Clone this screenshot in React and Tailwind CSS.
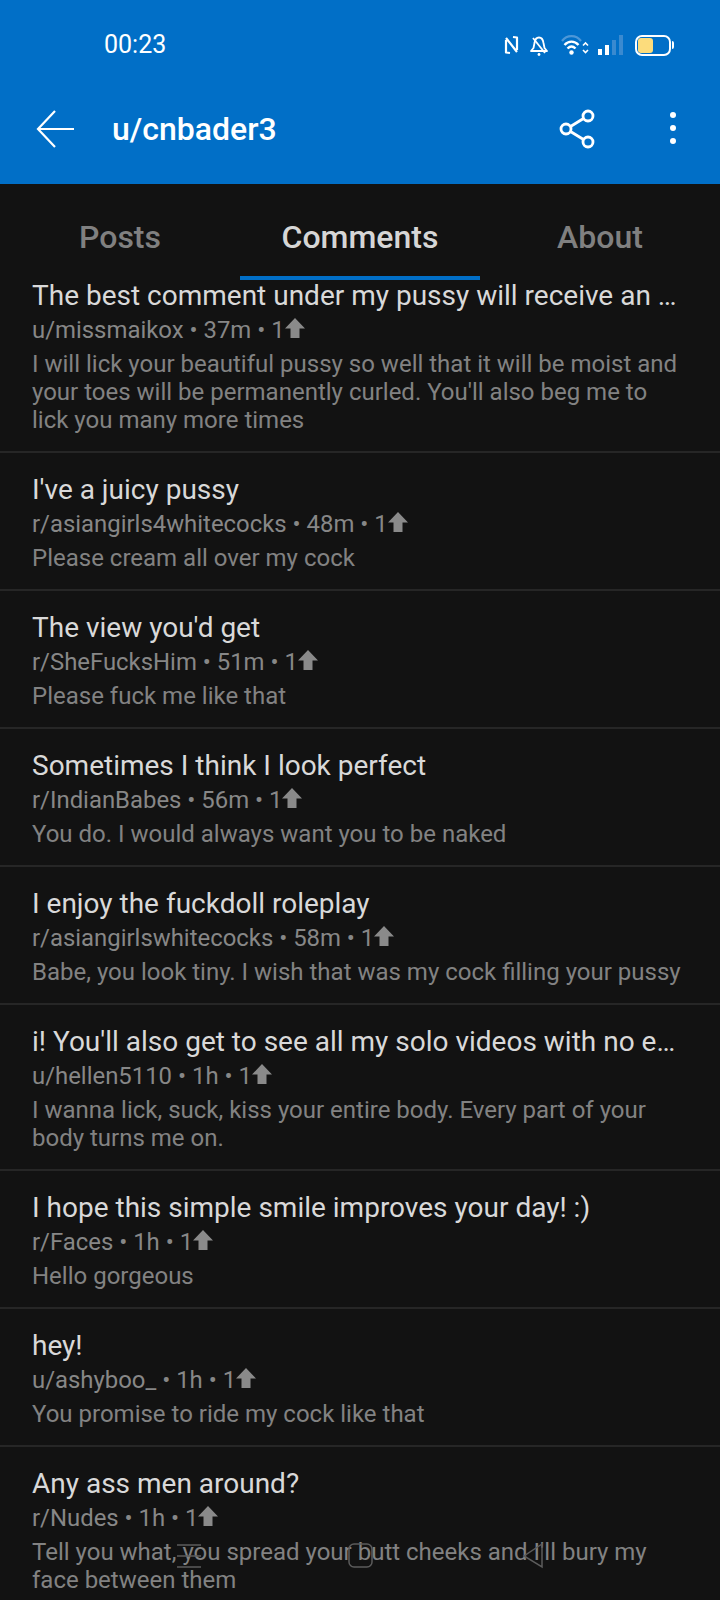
const comments = [
  {
    title: 'The best comment under my pussy will receive an …',
    meta: 'u/missmaikox • 37m • 1',
    body: "I will lick your beautiful pussy so well that it will be moist and your toes will be permanently curled. You'll also beg me to lick you many more times",
  },
  { title: "I've a juicy pussy", meta: 'r/asiangirls4whitecocks • 48m • 1', body: 'Please cream all over my cock' },
  { title: "The view you'd get", meta: 'r/SheFucksHim • 51m • 1', body: 'Please fuck me like that' },
  { title: 'Sometimes I think I look perfect', meta: 'r/IndianBabes • 56m • 1', body: 'You do. I would always want you to be naked' },
  { title: 'I enjoy the fuckdoll roleplay', meta: 'r/asiangirlswhitecocks • 58m • 1', body: 'Babe, you look tiny. I wish that was my cock filling your pussy' },
  {
    title: "i! You'll also get to see all my solo videos with no e…",
    meta: 'u/hellen5110 • 1h • 1',
    body: 'I wanna lick, suck, kiss your entire body. Every part of your body turns me on.',
  },
  { title: 'I hope this simple smile improves your day! :)', meta: 'r/Faces • 1h • 1', body: 'Hello gorgeous' },
  { title: 'hey!', meta: 'u/ashyboo_ • 1h • 1', body: 'You promise to ride my cock like that' },
  {
    title: 'Any ass men around?',
    meta: 'r/Nudes • 1h • 1',
    body: "Tell you what, you spread your butt cheeks and I'll bury my face between them",
  },
];

function UpArrow() {
  return (
    <svg width="20" height="20" viewBox="0 0 20 20" className="shrink-0 mb-[5px]">
      <path d="M10 0 L20 10.500 H14.500 V20 H5.500 V10.500 H0 Z" fill="#8a8a8a" />
    </svg>
  );
}

function StatusIcons() {
  return (
    <div className="flex items-center">
      <svg width="15" height="20" viewBox="0 0 15 20" fill="none" stroke="white" strokeWidth="2.200" className="mr-[11px]">
        <path d="M2 5 V17.500 L6 18 M2 3 L13 17 M13 15 V2.500 L9 2" strokeLinejoin="round" />
      </svg>
      <svg width="18" height="21" viewBox="0 0 18 21" fill="none" stroke="white" strokeWidth="1.800" className="mr-[13px]">
        <path d="M4.500 8 C5 4 7 2.500 9 2.500 C11.500 2.500 13 4.500 13.500 8 L14.500 13 L17 16 H1 L3.500 13 Z" strokeLinejoin="round" />
        <path d="M3 3 L15 18" />
        <circle cx="9" cy="19.500" r="1.400" fill="white" stroke="none" />
      </svg>
      <svg width="28" height="22" viewBox="0 0 28 22" fill="none" className="mr-[9px]">
        <path d="M1 7 C6 0.500 15 0.500 20 7" stroke="#4d97d8" strokeWidth="2.200" />
        <path d="M3.500 11 C7.500 6.500 13.500 6.500 17.500 11" stroke="white" strokeWidth="2.400" />
        <path d="M6.500 14.500 C9 12 12 12 14.500 14.500" stroke="white" strokeWidth="2.400" />
        <circle cx="10.500" cy="18.500" r="2.200" fill="white" />
        <path d="M22 11.500 L24.500 9 L27 11.500 M22 16 L24.500 18.500 L27 16" stroke="white" strokeWidth="1.600" />
      </svg>
      <div className="flex items-end gap-[3px] h-[20px] mr-[12px]">
        <div className="w-[4px] h-[6px] bg-white" />
        <div className="w-[4px] h-[10px] bg-white" />
        <div className="w-[4px] h-[15px] bg-[#3a8ad0]" />
        <div className="w-[4px] h-[20px] bg-[#3a8ad0]" />
      </div>
      <div className="w-[36px] h-[21px] border-2 border-white rounded-[7px] p-[1px] flex items-stretch">
        <div className="w-[15px] bg-[#fcdc7c] rounded-[3px]" />
      </div>
      <div className="w-[2px] h-[8px] bg-white rounded-r ml-[1px]" />
    </div>
  );
}

function CommentRow({ comment }) {
  return (
    <div className="px-8 pt-[20px] pb-[17px] border-b-2 border-[#262626]">
      <div className="text-[28px] leading-[34px] text-[#d9d9d9] whitespace-nowrap">{comment.title}</div>
      <div className="flex items-center text-[23.9px] leading-[35px] text-[#878787]">
        <span className="whitespace-pre">{comment.meta}</span>
        <UpArrow />
      </div>
      <div className="text-[24px] leading-[28px] text-[#828282] pt-[2px]">{comment.body}</div>
    </div>
  );
}

export default function App() {
  return (
    <div className="relative w-[720px] h-[1600px] overflow-hidden bg-[#121212] font-['Roboto',sans-serif]">
      <div className="h-[184px] bg-[#016fc7] text-white">
        <div className="h-[90px] pl-[104px] pr-[46px] flex items-center justify-between">
          <span className="text-[25px]">00:23</span>
          <StatusIcons />
        </div>
        <div className="h-[78px] pl-[36px] pr-[44px] flex items-center">
          <svg width="40" height="40" viewBox="0 0 40 40" fill="none" stroke="white" strokeWidth="2.200">
            <path d="M38 20 H2 M19 2 L2 20 L19 38" />
          </svg>
          <span className="ml-[36px] text-[32px] font-medium">u/cnbader3</span>
          <div className="ml-auto flex items-center">
            <svg width="36" height="40" viewBox="0 0 36 40" fill="none" stroke="white" strokeWidth="2.800">
              <circle cx="7" cy="20" r="5" />
              <circle cx="29" cy="7" r="5" />
              <circle cx="29" cy="33" r="5" />
              <path d="M11.500 17.500 L24.500 9.500 M11.500 22.500 L24.500 30.500" />
            </svg>
            <div className="ml-[75px] flex flex-col gap-[7px] -mt-[2px]">
              <div className="w-[6px] h-[6px] rounded-full bg-white" />
              <div className="w-[6px] h-[6px] rounded-full bg-white" />
              <div className="w-[6px] h-[6px] rounded-full bg-white" />
            </div>
          </div>
        </div>
      </div>

      <div className="h-[96px] flex text-[32px] font-medium text-[#808080]">
        <div className="w-[240px] flex items-center justify-center pt-[10px]">Posts</div>
        <div className="relative w-[240px] flex items-center justify-center pt-[10px] text-[#d6d6d6]">
          Comments
          <div className="absolute left-0 right-0 bottom-0 h-[4px] bg-[#016fc7]" />
        </div>
        <div className="w-[240px] flex items-center justify-center pt-[10px]">About</div>
      </div>

      <div className="h-[1320px] overflow-hidden">
        <div className="-mt-[21px]">
          {comments.map((c) => (
            <CommentRow key={c.title} comment={c} />
          ))}
        </div>
      </div>

      <div className="absolute left-0 right-0 top-[1542px] h-[28px]">
        <svg width="720" height="28" viewBox="0 0 720 28" fill="none" stroke="#5c5c5c" strokeWidth="1.500">
          <path d="M177 3 H201 M177 14 H201 M177 25 H201" />
          <rect x="349" y="2" width="23" height="23" rx="5" />
          <path d="M542 2 L524 14 L542 25 Z" />
        </svg>
      </div>
    </div>
  );
}
